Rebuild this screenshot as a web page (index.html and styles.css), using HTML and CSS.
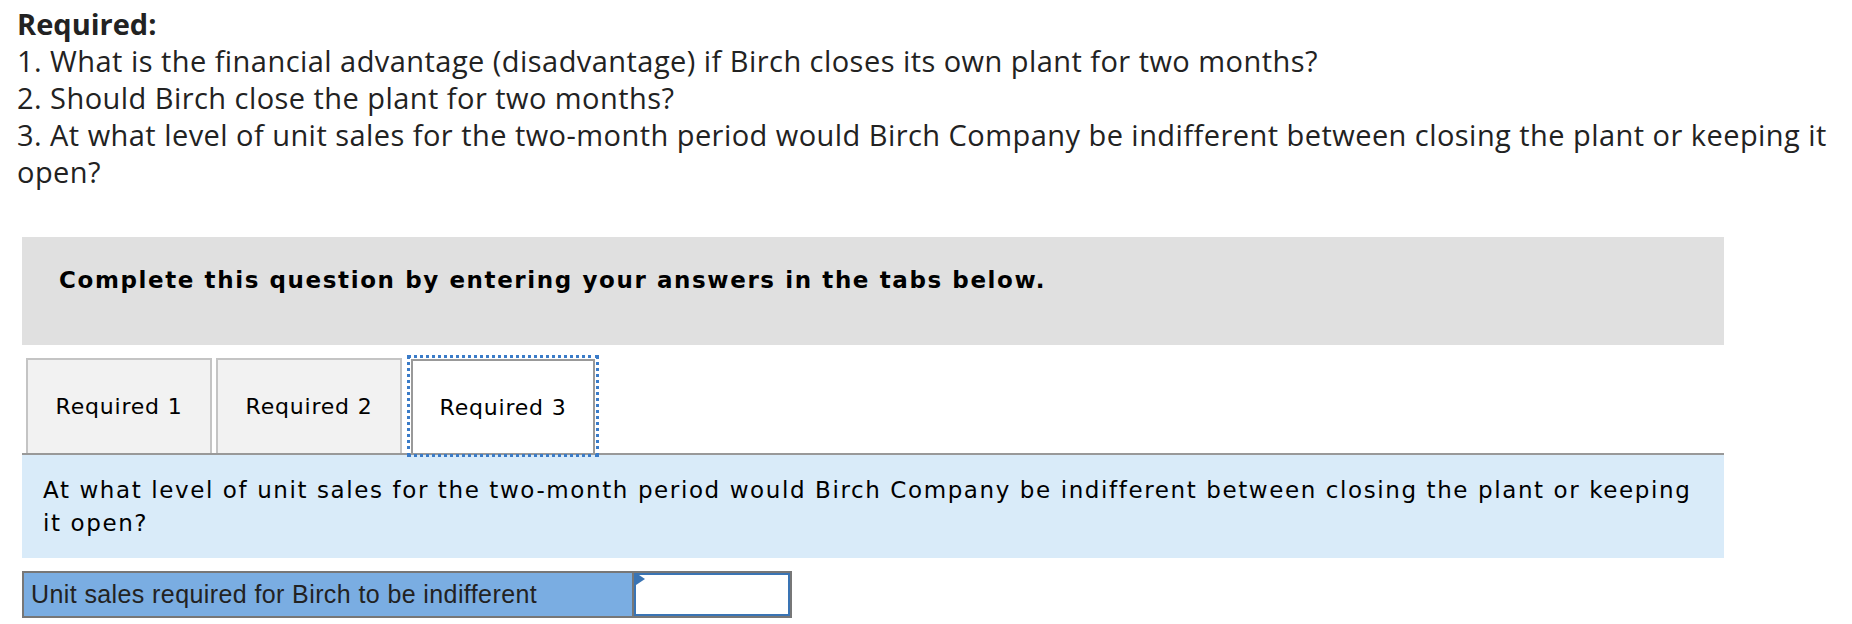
FILE: index.html
```html
<!DOCTYPE html>
<html lang="en">
<head>
<meta charset="utf-8">
<title>Required</title>
<link rel="stylesheet" href="styles.css">
</head>
<body>
<div class="req">
  <div class="req-title">Required:</div>
  <div class="req-line">1. What is the financial advantage (disadvantage) if Birch closes its own plant for two months?</div>
  <div class="req-line">2. Should Birch close the plant for two months?</div>
  <div class="req-line">3. At what level of unit sales for the two-month period would Birch Company be indifferent between closing the plant or keeping it open?</div>
</div>
<div class="widget">
  <div class="instructions">Complete this question by entering your answers in the tabs below.</div>
  <div class="tabs">
    <div class="tab">Required 1</div>
    <div class="tab">Required 2</div>
    <div class="tab tab-active">Required 3</div>
  </div>
  <div class="question">At what level of unit sales for the two-month period would Birch Company be indifferent between closing the plant or keeping it open?</div>
  <div class="answer-row">
    <div class="answer-label">Unit sales required for Birch to be indifferent</div>
    <div class="answer-input"><span class="marker"></span></div>
  </div>
</div>
</body>
</html>
```

FILE: styles.css
```css
html, body {
  margin: 0;
  padding: 0;
  background: #ffffff;
}

.req {
  padding: 5px 0 0 17px;
  width: 1828px;
  font-family: "Open Sans", Lato, sans-serif;
  font-size: 29px;
  letter-spacing: 0.45px;
  line-height: 37px;
  color: #222222;
}

.req-title {
  font-weight: 700;
  letter-spacing: 0;
}

.widget {
  margin: 47px 0 0 22px;
  width: 1702px;
}

.instructions {
  height: 108px;
  box-sizing: border-box;
  padding: 27px 37px 0 37px;
  background: #e0e0e0;
  font-family: "DejaVu Sans", Verdana, sans-serif;
  font-weight: 700;
  font-size: 23px;
  letter-spacing: 1.6px;
  line-height: 32px;
  color: #000000;
}

.tabs {
  display: flex;
  gap: 4px;
  padding: 13px 0 0 4px;
  border-bottom: 2px solid #999999;
}

.tab {
  width: 186px;
  height: 95px;
  box-sizing: border-box;
  border: 2px solid #c4c4c4;
  border-bottom: none;
  background: #f2f2f2;
  display: flex;
  align-items: center;
  justify-content: center;
  font-family: "DejaVu Sans", Verdana, sans-serif;
  font-size: 22px;
  letter-spacing: 0.8px;
  color: #000000;
}

.tab-active {
  margin-left: 5px;
  width: 184px;
  height: 94px;
  align-self: flex-end;
  background: #ffffff;
  border-color: #999999;
  outline: 3px dotted #3a7bc8;
  outline-offset: 1px;
}

.question {
  background: #d9ebf9;
  padding: 19px 12px 18px 21px;
  font-family: "DejaVu Sans", Verdana, sans-serif;
  font-size: 23px;
  letter-spacing: 1.6px;
  line-height: 33px;
  color: #000000;
}

.answer-row {
  display: flex;
  margin-top: 13px;
  width: 770px;
  height: 47px;
  box-sizing: border-box;
  border: 2px solid #777777;
}

.answer-label {
  width: 610px;
  background: #7aade2;
  border-right: 2px solid #777777;
  padding: 0 0 0 7px;
  box-sizing: border-box;
  font-family: "Liberation Sans", Arial, sans-serif;
  font-size: 25px;
  letter-spacing: 0.4px;
  line-height: 43px;
  color: #222222;
}

.answer-input {
  position: relative;
  flex: 1;
  background: #ffffff;
  border: 2px solid #3a74b4;
}

.marker {
  position: absolute;
  top: 0;
  left: 0;
  width: 0;
  height: 0;
  border-top: 6px solid transparent;
  border-bottom: 6px solid transparent;
  border-left: 9px solid #3a74b4;
  margin-top: -2px;
}
```
